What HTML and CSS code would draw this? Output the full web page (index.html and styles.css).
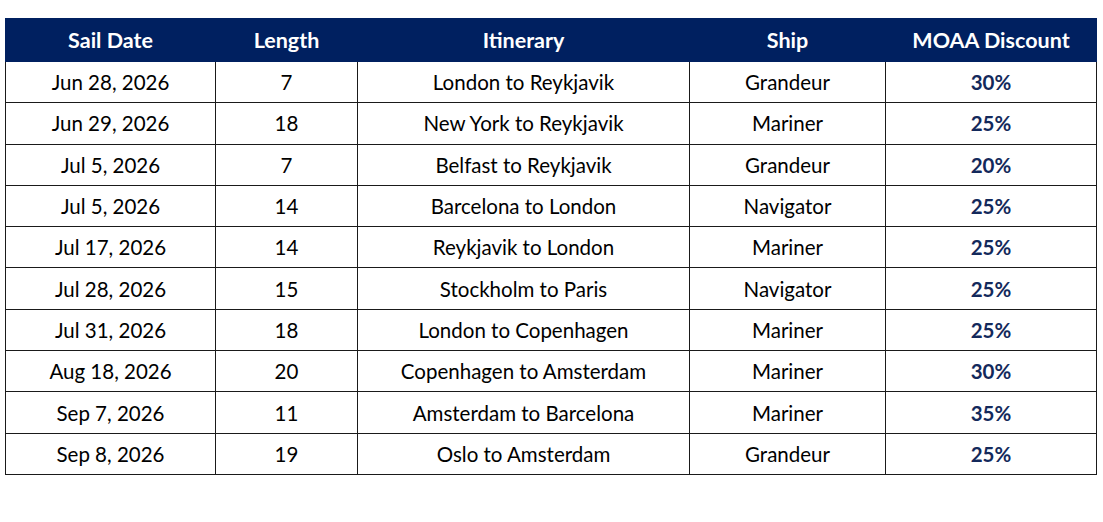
FILE: index.html
```html
<!DOCTYPE html>
<html>
<head>
<meta charset="utf-8">
<link rel="stylesheet" href="styles.css">
</head>
<body>
<table class="sail">
  <colgroup>
    <col class="c1"><col class="c2"><col class="c3"><col class="c4"><col class="c5">
  </colgroup>
  <thead>
    <tr><th>Sail Date</th><th>Length</th><th>Itinerary</th><th>Ship</th><th>MOAA Discount</th></tr>
  </thead>
  <tbody>
    <tr><td>Jun 28, 2026</td><td>7</td><td>London to Reykjavik</td><td>Grandeur</td><td class="pct">30%</td></tr>
    <tr><td>Jun 29, 2026</td><td>18</td><td>New York to Reykjavik</td><td>Mariner</td><td class="pct">25%</td></tr>
    <tr><td>Jul 5, 2026</td><td>7</td><td>Belfast to Reykjavik</td><td>Grandeur</td><td class="pct">20%</td></tr>
    <tr><td>Jul 5, 2026</td><td>14</td><td>Barcelona to London</td><td>Navigator</td><td class="pct">25%</td></tr>
    <tr><td>Jul 17, 2026</td><td>14</td><td>Reykjavik to London</td><td>Mariner</td><td class="pct">25%</td></tr>
    <tr><td>Jul 28, 2026</td><td>15</td><td>Stockholm to Paris</td><td>Navigator</td><td class="pct">25%</td></tr>
    <tr><td>Jul 31, 2026</td><td>18</td><td>London to Copenhagen</td><td>Mariner</td><td class="pct">25%</td></tr>
    <tr><td>Aug 18, 2026</td><td>20</td><td>Copenhagen to Amsterdam</td><td>Mariner</td><td class="pct">30%</td></tr>
    <tr><td>Sep 7, 2026</td><td>11</td><td>Amsterdam to Barcelona</td><td>Mariner</td><td class="pct">35%</td></tr>
    <tr><td>Sep 8, 2026</td><td>19</td><td>Oslo to Amsterdam</td><td>Grandeur</td><td class="pct">25%</td></tr>
  </tbody>
</table>
</body>
</html>
```

FILE: styles.css
```css
html, body {
  margin: 0;
  padding: 0;
  background: #ffffff;
}
body {
  padding: 18px 0 0 5px;
  font-family: Lato, "Open Sans", "Liberation Sans", sans-serif;
  color: #000;
}
.sail {
  border-collapse: collapse;
  table-layout: fixed;
  width: 1091px;
  font-size: 20.5px;
}
.c1 { width: 210px; }
.c2 { width: 142px; }
.c3 { width: 332px; }
.c4 { width: 196px; }
.c5 { width: 211px; }
.sail th {
  background: #002060;
  color: #ffffff;
  font-weight: 700;
  font-size: 21.5px;
  height: 42px;
  padding: 0;
  border: 1px solid #002060;
  text-align: center;
  vertical-align: middle;
}
.sail td {
  height: 40.3px;
  padding: 0;
  border: 1px solid #1a1a1a;
  text-align: center;
  vertical-align: middle;
}
.sail td.pct {
  color: #13295b;
  font-weight: 700;
}
```
